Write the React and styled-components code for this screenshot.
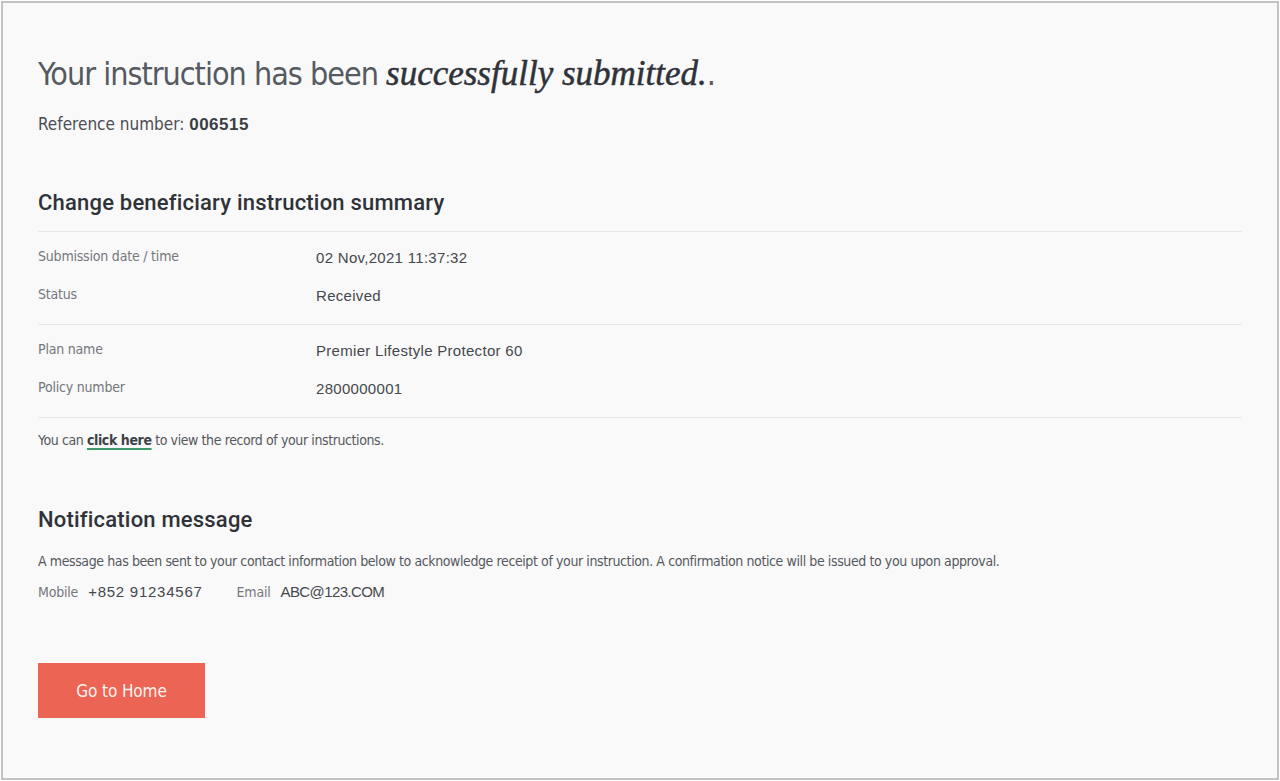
import React from 'react';
import styled, { createGlobalStyle } from 'styled-components';

const GlobalStyle = createGlobalStyle`
  html, body {
    margin: 0;
    padding: 0;
    background: #ffffff;
  }
  body {
    font-family: "DejaVu Sans Condensed", "Liberation Sans", sans-serif;
  }
`;

const Frame = styled.div`
  box-sizing: border-box;
  margin: 1px;
  height: 779px;
  border: 2px solid #c2c2c2;
  background: #f9f9f9;
  padding: 50px 35px 0 35px;
`;

const Title = styled.h1`
  margin: 0;
  font-family: "DejaVu Sans Condensed", sans-serif;
  font-weight: 400;
  font-size: 32px;
  line-height: 42px;
  letter-spacing: -1px;
  color: #555a60;
`;

const Fancy = styled.em`
  font-family: "Liberation Serif", "DejaVu Serif", serif;
  font-style: italic;
  font-weight: 400;
  font-size: 35px;
  color: #2f3238;
  letter-spacing: 0;
  -webkit-text-stroke: 0.5px #2f3238;
`;

const RefLine = styled.p`
  margin: 18px 0 0;
  font-size: 17px;
  line-height: 22px;
  color: #4a4d52;

  strong {
    font-family: "Liberation Sans", sans-serif;
    font-weight: 700;
    font-size: 17px;
    letter-spacing: 0.5px;
    color: #3a3d42;
  }
`;

const SectionTitle = styled.h2`
  margin: ${p => p.top}px 0 0;
  font-family: Roboto, "Liberation Sans", sans-serif;
  font-weight: 500;
  font-size: 22px;
  line-height: 28px;
  color: #2f3238;
  letter-spacing: 0.2px;
`;

const Summary = styled.div`
  margin-top: 14px;
`;

const Group = styled.div`
  border-top: 1px solid #e8e8e8;
  padding: 12px 0 18px;
  display: flex;
  flex-direction: column;
  gap: 14px;
`;

const Divider = styled.div`
  border-top: 1px solid #e8e8e8;
`;

const Row = styled.div`
  display: grid;
  grid-template-columns: 278px 1fr;
  align-items: baseline;
`;

const Label = styled.span`
  font-family: "DejaVu Sans Condensed", sans-serif;
  font-size: 14px;
  line-height: 24px;
  letter-spacing: -0.2px;
  color: #74777c;
`;

const Value = styled.span`
  font-family: "Liberation Sans", sans-serif;
  font-size: 15px;
  line-height: 24px;
  color: #45484d;
  letter-spacing: 0.3px;
  position: relative;
  top: 2px;
`;

const Note = styled.p`
  margin: ${p => p.top || 0}px 0 0;
  font-size: 14px;
  line-height: 20px;
  letter-spacing: -0.4px;
  color: #55585d;
`;

const Link = styled.a`
  font-weight: 700;
  color: #3e4248;
  text-decoration: underline;
  text-decoration-color: #3e9a6e;
  text-decoration-thickness: 2px;
  text-underline-offset: 3px;
`;

const Contacts = styled.div`
  margin-top: 9px;
  display: flex;
  align-items: baseline;
`;

const ContactItem = styled.div`
  display: flex;
  align-items: baseline;
  gap: 10px;
  margin-right: 34px;
`;

const ContactValue = styled.span`
  font-family: "Liberation Sans", sans-serif;
  font-size: 15px;
  color: #45484d;
  letter-spacing: ${p => p.tracking}px;
`;

const HomeButton = styled.button`
  margin-top: 59px;
  width: 167px;
  height: 55px;
  border: none;
  background: #ec6453;
  color: #fff4f2;
  font-family: "DejaVu Sans Condensed", sans-serif;
  font-size: 17px;
  letter-spacing: -0.1px;
  cursor: pointer;
`;

export default function App() {
  return (
    <>
      <GlobalStyle />
      <Frame>
        <Title>
          Your instruction has been <Fancy>successfully submitted.</Fancy>.
        </Title>
        <RefLine>
          Reference number: <strong>006515</strong>
        </RefLine>

        <SectionTitle top={53}>Change beneficiary instruction summary</SectionTitle>
        <Summary>
          <Group>
            <Row>
              <Label>Submission date / time</Label>
              <Value>02 Nov,2021 11:37:32</Value>
            </Row>
            <Row>
              <Label>Status</Label>
              <Value>Received</Value>
            </Row>
          </Group>
          <Group>
            <Row>
              <Label>Plan name</Label>
              <Value>Premier Lifestyle Protector 60</Value>
            </Row>
            <Row>
              <Label>Policy number</Label>
              <Value>2800000001</Value>
            </Row>
          </Group>
          <Divider />
        </Summary>
        <Note top={12}>
          You can <Link href="#">click here</Link> to view the record of your instructions.
        </Note>

        <SectionTitle top={56}>Notification message</SectionTitle>
        <Note top={17}>
          A message has been sent to your contact information below to acknowledge receipt of your
          instruction. A confirmation notice will be issued to you upon approval.
        </Note>
        <Contacts>
          <ContactItem>
            <Label>Mobile</Label>
            <ContactValue tracking={0.75}>+852 91234567</ContactValue>
          </ContactItem>
          <ContactItem>
            <Label>Email</Label>
            <ContactValue tracking={-0.6}>ABC@123.COM</ContactValue>
          </ContactItem>
        </Contacts>

        <HomeButton>Go to Home</HomeButton>
      </Frame>
    </>
  );
}
